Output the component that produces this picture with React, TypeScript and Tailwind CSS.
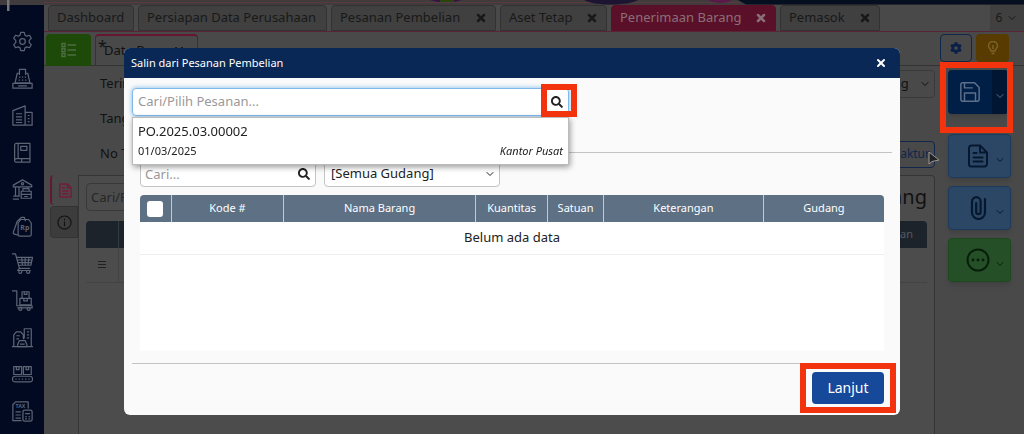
import type { ReactNode } from "react";
import { ChevronDown, X } from "lucide-react";
import { FaSearch, FaCog } from "react-icons/fa";

const tabs = [
  { label: "Dashboard", width: "w-[86px]" },
  { label: "Persiapan Data Perusahaan", width: "w-[189px]" },
  { label: "Pesanan Pembelian", width: "w-[165px]", closable: true },
  { label: "Aset Tetap", width: "w-[107px]", closable: true },
  { label: "Penerimaan Barang", width: "w-[165px]", closable: true, active: true },
  { label: "Pemasok", width: "w-[100px]", closable: true },
];

const columns = [
  { label: "Kode #", width: "w-[15.1%]" },
  { label: "Nama Barang", width: "w-[25.8%]" },
  { label: "Kuantitas", width: "w-[9.7%]" },
  { label: "Satuan", width: "w-[7.5%]" },
  { label: "Keterangan", width: "w-[21.5%]" },
  { label: "Gudang", width: "w-[16.2%]" },
];

const modules: { name: string; icon: ReactNode }[] = [
  {
    name: "Pengaturan",
    icon: (
      <>
        <path d="M10 1.5h4l.8 3.2 2 1.2 3.2-1 2 3.500-2.300 2.300v2.600l2.300 2.300-2 3.500-3.200-1-2 1.200-.8 3.200h-4l-.8-3.200-2-1.200-3.200 1-2-3.500 2.300-2.300v-2.600L2 8.400l2-3.500 3.200 1 2-1.200z" />
        <circle cx="12" cy="12" r="3.200" />
      </>
    ),
  },
  {
    name: "Kasir",
    icon: (
      <>
        <path d="M8.500 8V1.500h7V8M8.500 6H6L3.500 17h17L18 6h-2.500M1 17.500h22V23H1zM7 20.300h10" />
        <path d="M8 10.500h1.500M11.300 10.500h1.500M14.500 10.500H16M7.500 13.800H9M11.300 13.800h1.500M15 13.800h1.500" />
      </>
    ),
  },
  {
    name: "Perusahaan",
    icon: (
      <>
        <path d="M1 23V6.500L15 1v22zM15 8.500h8V23h-8" />
        <path d="M4.500 10h7M4.500 13.500h7M4.500 17h7M4.500 20h7M18 12h2M18 15.500h2M18 19h2" />
      </>
    ),
  },
  {
    name: "Buku Besar",
    icon: (
      <>
        <path d="M5 1.500h15.500V23H5a2 2 0 0 1-2-2V3.500a2 2 0 0 1 2-2zM7 1.500V19M3 21a2 2 0 0 1 2-2h15.500M11 23v-4" />
        <rect x="10" y="5" width="7" height="4.500" />
      </>
    ),
  },
  {
    name: "Kas dan Bank",
    icon: (
      <>
        <path d="M1.500 9V7L12 1l10.500 6v2zM4 9v10M8 9v10M1 23h7M1.500 19.500H9M18 9v2" />
        <circle cx="12" cy="5.500" r="1.300" />
        <path d="M12.500 14v-3h7v3M10.500 14h11.500v8H10.500zM10.500 17.500H22M14 20h4" />
      </>
    ),
  },
  {
    name: "Penjualan",
    icon: (
      <>
        <path d="M10 4h9l3 4v13a2 2 0 0 1-2 2H9a2 2 0 0 1-2-2V8zM7 22l-4-1.200a2 2 0 0 1-1.500-2.400L6 6l5-4.500h3L15.500 6" />
        <text x="9.500" y="16.500" className="fill-current stroke-none text-[8px] font-bold">
          Rp
        </text>
      </>
    ),
  },
  {
    name: "Pembelian",
    icon: (
      <>
        <path d="M0 1h4l4.500 16.500h12M5 5h18.500L21.500 14H7.500M5.800 8H23M6.700 11h15.500M11 5l1 9M15 5v9M19.300 5l-1 9M8.500 17.500L6.500 20h15" />
        <circle cx="9.500" cy="21.500" r="1.800" />
        <circle cx="18.500" cy="21.500" r="1.800" />
      </>
    ),
  },
  {
    name: "Persediaan",
    icon: (
      <>
        <path d="M0 1h5.500v17H23v2.500H6M9 9.500h13V17H9zM11.500 2h8v7.500h-8zM14 2v3h3V2M13.500 9.500v3h4v-3" />
        <circle cx="9.500" cy="21.500" r="1.800" />
        <circle cx="19" cy="21.500" r="1.800" />
      </>
    ),
  },
  {
    name: "Aset Tetap",
    icon: (
      <>
        <path d="M0 22.500h24M2 22.500V9l3-3.500h5l3 3.500v5M14 13V2h8v20.500M17 5.500h2.500M17 9h2.500M17 12.500h2.500M5 10h4M5 13.500h3" />
        <path d="M6.500 20l2-4.500h6.500l2 4.500v2.500h-10.500zM9 19.500h5.500" />
      </>
    ),
  },
  {
    name: "Manufaktur",
    icon: (
      <>
        <path d="M2 3h9v9H2zM13 3h9v9h-9zM5 3v3.500h3V3M16 3v3.500h3V3" />
        <rect x="0.500" y="14" width="23" height="6.500" rx="3.200" />
        <path d="M4.500 16.500v1.500M8.200 16.500v1.500M12 16.500v1.500M15.800 16.500v1.500M19.500 16.500v1.500" />
      </>
    ),
  },
  {
    name: "Pajak",
    icon: (
      <>
        <path d="M11 22.500H1V4l3-3h14.500v7.500M4 12.500h6M4 16h6M4 19.500h6" />
        <rect x="12.500" y="10.500" width="10.500" height="12.500" rx="2" />
        <path d="M15 14.500h5.500M15 18h2M18.800 18h2M15 20.500h2M18.800 20.500h2" />
        <text x="4" y="8.500" className="fill-current stroke-none text-[6px] font-bold">
          TAX
        </text>
      </>
    ),
  },
];

function Highlight({ className }: { className: string }) {
  return <span aria-hidden="true" className={`pointer-events-none absolute border-[6px] border-[#f2330d] ${className}`} />;
}

function Sidebar() {
  return (
    <nav aria-label="Modul" className="flex w-11 shrink-0 flex-col items-center gap-4 bg-[#010a20] pt-[26px] text-[#5d6475]">
      {modules.map((m) => (
        <a key={m.name} href="#" aria-label={m.name}>
          <svg viewBox="0 0 24 24" className="h-[21px] w-[21px] fill-none stroke-current" strokeWidth="1.4" strokeLinejoin="round">
            {m.icon}
          </svg>
        </a>
      ))}
    </nav>
  );
}

function TabBar() {
  return (
    <div className="flex h-[27px] items-stretch gap-1 border-b border-[#5b2434] pl-1 text-[13px]">
      {tabs.map((t) => (
        <button
          key={t.label}
          type="button"
          className={`flex shrink-0 items-center justify-between whitespace-nowrap rounded-t border px-2 ${t.width} ${
            t.active ? "border-[#5a1029] bg-[#5a1029] text-[#8a6f78]" : "border-[#323232] bg-[#404040] text-[#191919]"
          }`}
        >
          {t.label}
          {t.closable && <X className="h-3 w-3" strokeWidth={5} />}
        </button>
      ))}
      <button type="button" aria-label="6 tab" className="ml-auto flex w-[34px] items-center justify-center gap-1 bg-[#404040] text-xs text-[#191919]">
        6
        <ChevronDown className="h-3 w-3" />
      </button>
    </div>
  );
}

function Actions() {
  const base = "flex h-11 w-[63px] items-center justify-center gap-1 rounded border shadow-md";
  return (
    <div className="flex w-[63px] shrink-0 flex-col gap-2">
      <div className="relative mb-3">
        <button type="button" aria-label="Simpan" className="flex h-11 w-[60px] overflow-hidden rounded bg-[#001f47] text-[#5c6f8b] shadow-md">
          <span className="flex flex-1 items-center justify-center">
            <svg viewBox="0 0 24 24" className="h-[22px] w-[22px] fill-none stroke-current" strokeWidth="1.6" strokeLinejoin="round">
              <path d="M2 4a2 2 0 0 1 2-2h13l5 5v13a2 2 0 0 1-2 2H4a2 2 0 0 1-2-2zM6 2v5.500h9M6 22v-9h12v9" />
            </svg>
          </span>
          <span className="flex w-4 items-center justify-center bg-[#001632] pt-2">
            <ChevronDown className="h-3 w-3" />
          </span>
        </button>
        <Highlight className="-left-2 -top-2 h-[71px] w-[73px]" />
      </div>
      <button type="button" aria-label="Dokumen" className={`${base} border-[#1b3a5c] bg-[#2b4765] text-[#06182f]`}>
        <svg viewBox="0 0 24 24" className="ml-3 h-6 w-6 fill-none stroke-current" strokeWidth="2" strokeLinejoin="round" strokeLinecap="round">
          <path d="M5.500 1.500H14l7 7V20a2.500 2.500 0 0 1-2.500 2.500h-13A2.500 2.500 0 0 1 3 20V4a2.500 2.500 0 0 1 2.500-2.500zM14 1.500v7h7M7.500 9h3M7.500 13.500h9M7.500 17.500h9" />
        </svg>
        <ChevronDown className="mt-2 h-3 w-3" />
      </button>
      <button type="button" aria-label="Lampiran" className={`${base} border-[#1b3a5c] bg-[#2b4765] text-[#06182f]`}>
        <svg viewBox="0 0 24 24" className="ml-3 h-6 w-6 fill-none stroke-current" strokeWidth="2.200" strokeLinecap="round">
          <path d="M19 3v13.500a6.500 6.500 0 0 1-13 0V5.500a4.300 4.300 0 0 1 8.600 0V16a2.200 2.200 0 0 1-4.400 0V7" />
        </svg>
        <ChevronDown className="mt-2 h-3 w-3" />
      </button>
      <button type="button" aria-label="Lainnya" className={`${base} border-[#1c4a1e] bg-[#255027] text-[#071f0a]`}>
        <svg viewBox="0 0 24 24" className="ml-3 h-6 w-6 fill-none stroke-current" strokeWidth="2" strokeLinecap="round">
          <circle cx="12" cy="12" r="10.500" />
          <path d="M7 12h.1M12 12h.1M17 12h.1" strokeWidth="2.800" />
        </svg>
        <ChevronDown className="mt-2 h-3 w-3" />
      </button>
    </div>
  );
}

function Workspace() {
  return (
    <main className="flex min-w-0 flex-1 flex-col bg-[#494949] text-[#111]">
      <TabBar />
      <div className="flex h-[34px] items-start border-b border-[#333] pl-0.5 pr-[15px] pt-0.5">
        <button type="button" aria-label="Daftar" className="flex h-8 w-[45px] items-center justify-center rounded-t bg-[#1d4909] text-[#4e6c43]">
          <svg viewBox="0 0 16 16" className="h-4 w-4 fill-none stroke-current" strokeWidth="1.400">
            <path d="M1 1.500h3v3H1zM1 6.500h3v3H1zM1 11.500h3v3H1zM6.500 3H15M6.500 8H15M6.500 13H15" />
          </svg>
        </button>
        <button type="button" className="relative ml-1 flex h-8 w-[103px] items-center justify-between rounded-t border border-t-2 border-[#333] border-t-[#651732] pl-2 pr-3 text-[13px]">
          <span className="absolute left-0.5 top-0.5 text-base leading-4">*</span>
          Data Baru
          <X className="h-3 w-3" strokeWidth={4} />
        </button>
        <div className="ml-auto flex gap-1">
          <button type="button" aria-label="Atur" className="flex h-7 w-8 items-center justify-center rounded border border-[#10264a] text-[#08204a]">
            <FaCog className="h-3 w-3" />
          </button>
          <button type="button" aria-label="Tips" className="flex h-7 w-[33px] items-center justify-center rounded bg-[#583b00] text-[#7c6528]">
            <svg viewBox="0 0 14 14" className="h-[14px] w-[14px] fill-none stroke-current" strokeWidth="1.400">
              <path d="M5 10C5 8 2.500 7.500 2.500 5a4.500 4.500 0 0 1 9 0C11.500 7.500 9 8 9 10zM5.500 12.500h3M7 4v4" />
            </svg>
          </button>
        </div>
      </div>

      <div className="flex flex-1 gap-[13px] pl-1.5 pr-[13px] pt-1">
        <div className="flex min-w-0 flex-1 flex-col">
          <div className="flex flex-col gap-[7px] pl-[50px] text-[13px]">
            <div className="flex h-7 items-center justify-between">
              <label htmlFor="supplier">Terima dari</label>
              <div className="relative flex items-center">
                <select id="supplier" className="h-7 w-[80px] appearance-none rounded border border-[#393939] pl-1 text-[13px]">
                  <option>Gudang</option>
                </select>
                <ChevronDown className="pointer-events-none absolute right-1 h-3 w-3" />
              </div>
            </div>
            <div className="flex h-7 items-center">Tanggal</div>
            <div className="flex h-7 items-center justify-between">
              <span>No Terima</span>
              <a href="#" className="flex h-[27px] items-center rounded border border-[#10264a] px-1 text-xs text-[#10264a]">
                Faktur
              </a>
            </div>
          </div>

          <div className="mt-[7px] flex flex-1">
            <div className="flex w-7 shrink-0 flex-col gap-px">
              <button type="button" aria-label="Rincian" className="flex h-[30px] items-center justify-center rounded-l border-l-2 border-[#651732] text-[#741b3b]">
                <svg viewBox="0 0 16 16" className="h-[15px] w-[15px] fill-none stroke-current" strokeWidth="1.500" strokeLinejoin="round">
                  <path d="M2 1h8l4 4v10H2zM10 1v4h4M4.500 5h3M4.500 8.500h7M4.500 11.500h7" />
                </svg>
              </button>
              <button type="button" aria-label="Info" className="flex h-8 items-center justify-center rounded-l border border-[#333] bg-[#3c3c3c]">
                <svg viewBox="0 0 16 16" className="h-[15px] w-[15px] fill-none stroke-current" strokeWidth="1.200">
                  <circle cx="8" cy="8" r="7" />
                  <path d="M8 7v5M8 4v1.500" />
                </svg>
              </button>
            </div>
            <section className="flex-1 rounded-tr border border-b-0 border-[#353535] bg-[#4c4c4c] px-[7px] pt-[7px]">
              <div className="flex h-7 items-center justify-between">
                <input aria-label="Cari barang" placeholder="Cari/Pilih Barang" className="h-7 w-[300px] rounded border border-[#393939] px-1 text-[13px] placeholder:text-[#262626]" />
                <h2 className="text-xl">Barang</h2>
              </div>
              <table className="mt-2.5 w-full table-fixed text-[11px]">
                <thead className="h-[27px] bg-[#1c232b] text-[#555a61]">
                  <tr>
                    <th className="w-8 rounded-tl border-r border-[#333a42]" />
                    <th />
                    <th className="w-20 rounded-tr pr-[14px] text-right font-normal">Satuan</th>
                  </tr>
                </thead>
                <tbody>
                  <tr className="h-[34px] border-b border-[#434343]">
                    <td className="border-r border-[#434343]">
                      <svg viewBox="0 0 8 7" className="mx-auto h-[7px] w-2 stroke-[#222]">
                        <path d="M0 .5h8M0 3.500h8M0 6.500h8" />
                      </svg>
                    </td>
                    <td />
                    <td />
                  </tr>
                </tbody>
              </table>
            </section>
          </div>
        </div>
        <Actions />
      </div>
    </main>
  );
}

function CopyOrderDialog() {
  return (
    <div className="fixed inset-0 px-4 pt-12">
      <div role="dialog" aria-labelledby="dialog-title" className="mx-auto max-w-[776px] rounded-md bg-[#fafafa] text-[#222]">
        <header className="flex h-[30px] items-center justify-between rounded-t-md bg-[#0a2856] pl-[7px] pr-[13px] text-white">
          <h1 id="dialog-title" className="text-[11px]">
            Salin dari Pesanan Pembelian
          </h1>
          <button type="button" aria-label="Tutup">
            <X className="h-3 w-3" strokeWidth={4} />
          </button>
        </header>

        <div className="px-2 pt-2.5">
          <div className="relative h-16 max-w-[437px]">
            <input
              aria-label="Cari pesanan"
              placeholder="Cari/Pilih Pesanan..."
              className="h-7 w-full rounded border border-[#7fb9ea] bg-white pb-0.5 pl-[5px] pr-8 text-[13px] shadow-[0_0_5px_#7fb9ea] placeholder:text-[#999]"
            />
            <button type="button" aria-label="Cari" className="absolute right-1.5 top-2">
              <FaSearch className="h-3 w-3 text-[#222]" />
            </button>
            <div className="absolute inset-x-0 top-[29px] z-10 flex h-12 flex-col justify-between border border-[#bbb] bg-white px-[5px] pb-[5px] pt-1 shadow-[1px_2px_6px_#0006]">
              <span className="text-[13px] leading-[18px]">PO.2025.03.00002</span>
              <span className="flex justify-between text-[11px] leading-4">
                01/03/2025
                <em>Kantor Pusat</em>
              </span>
            </div>
            <Highlight className="-right-2 -top-1 z-20 h-[33px] w-9" />
          </div>

          <div className="border-t border-[#c4c4c4] px-2 pt-[7px]">
            <div className="flex h-[27px] gap-2 text-[13px]">
              <div className="relative w-44">
                <input aria-label="Cari barang pesanan" placeholder="Cari..." className="h-full w-full rounded border border-[#c4c4c4] bg-white px-1 placeholder:text-[#999]" />
                <FaSearch className="absolute right-1.5 top-2 h-3 w-3" />
              </div>
              <div className="relative w-44">
                <select aria-label="Gudang" className="h-full w-full appearance-none rounded border border-[#c4c4c4] bg-white px-1.5">
                  <option>[Semua Gudang]</option>
                </select>
                <ChevronDown className="pointer-events-none absolute right-1 top-2 h-3 w-3" />
              </div>
            </div>

            <div className="mt-2 min-h-[156px] bg-white">
              <table className="w-full table-fixed">
                <thead className="h-[27px] text-[11px] text-white">
                  <tr>
                    <th className="w-[4.2%] rounded-tl bg-[#5d7084]">
                      <input type="checkbox" aria-label="Pilih semua" className="mx-auto block h-4 w-4 appearance-none rounded-[3px] bg-white" />
                    </th>
                    {columns.map((c) => (
                      <th key={c.label} className={`border-l border-[#c3cad1] bg-[#5d7084] font-normal last:rounded-tr ${c.width}`}>
                        {c.label}
                      </th>
                    ))}
                  </tr>
                </thead>
                <tbody>
                  <tr className="h-8 border-b border-[#eee] text-center text-[13px]">
                    <td colSpan={7}>Belum ada data</td>
                  </tr>
                </tbody>
              </table>
            </div>
          </div>

          <footer className="mt-3 flex justify-end border-t border-[#c4c4c4] px-2 pb-[11px] pt-2">
            <div className="relative">
              <button type="button" className="h-8 w-[72px] rounded bg-[#17499b] text-sm text-white">
                Lanjut
              </button>
              <Highlight className="-inset-x-3 -bottom-[9px] -top-[9px]" />
            </div>
          </footer>
        </div>
      </div>
    </div>
  );
}

export default function App() {
  return (
    <div className="flex h-screen flex-col overflow-hidden bg-[#494949] font-['Noto_Sans',sans-serif]">
      <div className="relative h-[5px] shrink-0 bg-[#403c3d]">
        <svg viewBox="0 0 1024 12" preserveAspectRatio="none" className="absolute left-0 top-0 z-10 h-3 w-full">
          <path d="M44 2.500h696" stroke="#5b3a3e" />
          <path d="M430 0h32l-8 2h-16z" fill="#351246" />
          <path d="M440 0h14v2h-14z" fill="#28450f" />
          <path d="M584 0h54c-10 6-44 6-54 0z" fill="#1c1430" />
          <path d="M708 0h24c-4 4-18 4-24 0z" fill="#5a1a48" />
          <path d="M738 0h286v4.500H746z" fill="#060f20" />
          <path d="M7 0h2.500v11H7z" fill="#777" />
        </svg>
      </div>
      <div className="flex flex-1">
        <Sidebar />
        <Workspace />
      </div>
      <CopyOrderDialog />
      <svg viewBox="0 0 12 16" className="absolute left-[928px] top-[151px] h-4 w-3 fill-[#222] stroke-[#999]">
        <path d="M1 1v12l3-2.500L11 9z" />
      </svg>
    </div>
  );
}
